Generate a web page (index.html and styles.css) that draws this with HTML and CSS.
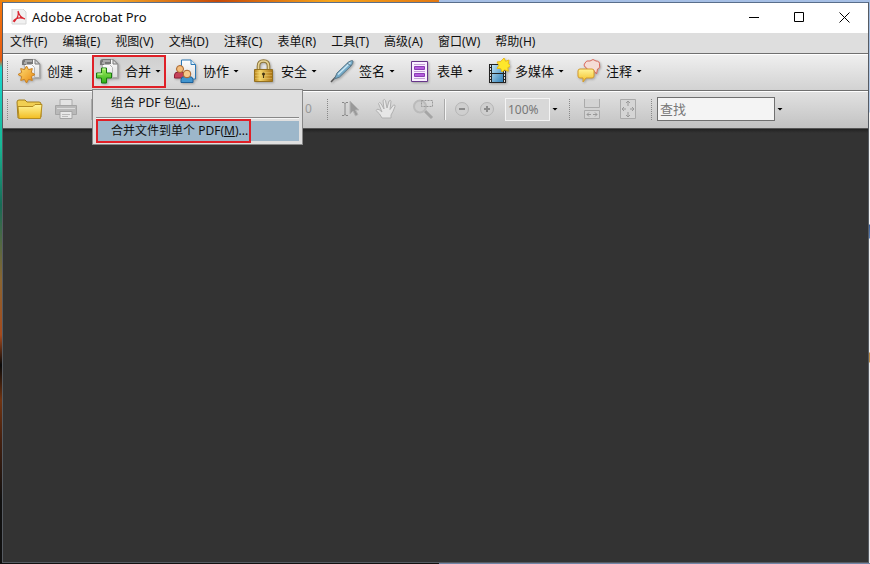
FILE: index.html
```html
<!DOCTYPE html>
<html lang="zh-CN">
<head>
<meta charset="utf-8">
<title>Adobe Acrobat Pro</title>
<link rel="stylesheet" href="styles.css">
</head>
<body>
<svg class="defs" width="0" height="0" aria-hidden="true">
  <defs>
    <linearGradient id="gold" x1="0" y1="0" x2="1" y2="1"><stop offset="0" stop-color="#ffe27a"/><stop offset="1" stop-color="#e8860c"/></linearGradient>
    <linearGradient id="yellow" x1="0" y1="0" x2="0" y2="1"><stop offset="0" stop-color="#fff59a"/><stop offset="1" stop-color="#f2bd22"/></linearGradient>
    <linearGradient id="green" x1="0" y1="0" x2="0" y2="1"><stop offset="0" stop-color="#a4ee62"/><stop offset="1" stop-color="#2fb015"/></linearGradient>
    <linearGradient id="blue" x1="0" y1="0" x2="1" y2="1"><stop offset="0" stop-color="#bfe2f4"/><stop offset="1" stop-color="#2f7fb8"/></linearGradient>
    <linearGradient id="brass" x1="0" y1="0" x2="1" y2="0"><stop offset="0" stop-color="#b8841c"/><stop offset=".3" stop-color="#f3d468"/><stop offset="1" stop-color="#ac7314"/></linearGradient>
    <linearGradient id="paper" x1="0" y1="0" x2="0" y2="1"><stop offset="0" stop-color="#fff"/><stop offset="1" stop-color="#dcdcdc"/></linearGradient>
    <symbol id="pages" viewBox="0 0 24 26">
      <path d="M10 6h13v15H11z" fill="#8b8b8b" opacity=".3"/>
      <path d="M10.500 1.500h7l4 4V19.500h-11z" fill="url(#paper)" stroke="#aaa"/>
      <path d="M17 1.500v4.500h4.500z" fill="#ddd" stroke="#777"/>
      <path d="M6.500 6.500h7l3 3V20h-10z" fill="url(#paper)" stroke="#b5b5b5"/>
      <path d="M4 7V4q0-3 3-3h8v5H8v1z" fill="#777"/>
      <path d="M7 3h7M6 5h3" stroke="#ddd"/>
    </symbol>
  </defs>
</svg>
<main class="window">
  <header class="titlebar">
    <svg class="logo" viewBox="0 0 16 16"><path d="M1 0h11l3 3v12H1z" fill="#f1f1f1" stroke="#d5d5d5"/><path d="M2 12.500C4 9.500 8 8 13.500 9.500M3 13C6 10 8 6 7 2c1 4 3 7 7 8" fill="none" stroke="#d9232e" stroke-width="1.200"/></svg>
    <h1>Adobe Acrobat Pro</h1>
    <div class="controls">
      <button aria-label="最小化"><svg viewBox="0 0 11 11"><path d="M0 5.500h10"/></svg></button>
      <button aria-label="最大化"><svg viewBox="0 0 11 11"><path d="M.5.5h9v9h-9z"/></svg></button>
      <button aria-label="关闭"><svg viewBox="0 0 11 11"><path d="M.5.5l10 10M10.500.5l-10 10"/></svg></button>
    </div>
  </header>
  <nav class="menubar">
    <button>文件(F)</button><button>编辑(E)</button><button>视图(V)</button><button>文档(D)</button><button>注释(C)</button><button>表单(R)</button><button>工具(T)</button><button>高级(A)</button><button>窗口(W)</button><button>帮助(H)</button>
  </nav>
  <div class="toolbar tasks">
    <span class="grip"></span>
    <button class="task">
      <svg class="icon" viewBox="0 0 24 26"><use href="#pages" width="24" height="26"/><path d="M8.500 8l2 3.600 3.800-1-1 3.900 3.700 2-3.700 2 1 3.900-3.800-1-2 3.600-2-3.600-3.800 1 1-3.900-3.700-2 3.700-2-1-3.900 3.800 1z" fill="url(#gold)" stroke="#c98022"/></svg>
      <span>创建</span><i class="caret"></i>
    </button>
    <div class="dropdown">
      <button class="task open" aria-expanded="true">
        <svg class="icon" viewBox="0 0 24 26"><use href="#pages" width="24" height="26"/><path d="M5.500 10h5v5h5v5h-5v5h-5v-5h-5v-5h5z" fill="url(#green)" stroke="#197a10"/><path d="M6.500 11h3M1.500 16h5" stroke="#d7ffb5"/></svg>
        <span>合并</span><i class="caret"></i>
      </button>
      <div class="popup">
        <button class="choice">组合 PDF 包(<u>A</u>)...</button>
        <hr>
        <button class="choice active"><span class="mark">合并文件到单个 PDF(<u>M</u>)...</span></button>
      </div>
    </div>
    <button class="task">
      <svg class="icon" viewBox="0 0 24 26"><path d="M7.500 2h9.500l4.500 4.500V21h-14z" fill="url(#paper)" stroke="#2d78b5"/><path d="M17 2v4.500h4.500" fill="#d9edfa" stroke="#2d78b5"/><path d="M.5 20v-3q0-3 4-3h3q4 0 4 3v3z" fill="#c54259" stroke="#8c2138"/><circle cx="6" cy="11" r="3.500" fill="#f3bd7c" stroke="#a8622b"/><path d="M7 24.500v-3q0-3 4-3h4q4 0 4 3v3z" fill="#4195cf" stroke="#1d5f98"/><circle cx="13" cy="16" r="3.800" fill="#f7c98b" stroke="#a8622b"/></svg>
      <span>协作</span><i class="caret"></i>
    </button>
    <button class="task">
      <svg class="icon" viewBox="0 0 24 26"><path d="M6.500 12V8q0-5 5-5t5 5v4" fill="none" stroke="#8d753a" stroke-width="3.600"/><path d="M6.500 12V8q0-5 5-5t5 5v4" fill="none" stroke="#e8d596" stroke-width="1.600"/><path d="M2.500 11.500h18v12h-18z" fill="url(#brass)" stroke="#94701f"/><path d="M3 14.500h17M3 17.500h17M3 20.500h17" stroke="#f6dc80" opacity=".35"/><circle cx="11.500" cy="16" r="1.500" fill="#443514"/><path d="M11 16h1v4h-1z" fill="#443514"/></svg>
      <span>安全</span><i class="caret"></i>
    </button>
    <button class="task">
      <svg class="icon" viewBox="0 0 24 26"><path d="M1 24l6-6.500" stroke="#555" stroke-width="1.500"/><path d="M4.500 21L7 15 18.500 4q4-2.500 4.500-1 .5 2-2 5L9.500 19z" fill="#75abc9" stroke="#5a7889"/><path d="M8 16.500L20.500 4.500" stroke="#cbe7f4" stroke-width="1.500"/><path d="M17 5l4 3" stroke="#5a7889"/></svg>
      <span>签名</span><i class="caret"></i>
    </button>
    <button class="task">
      <svg class="icon" viewBox="0 0 24 26"><path d="M3.500 3.500h16v20h-16z" fill="#f9efff" stroke="#67358a"/><path d="M6 6.500h11M6 13.500h11M6 20.500h11" stroke="#c5a2d6"/><path d="M6.500 8.500h10v3h-10zM6.500 15.500h10v3h-10z" fill="#b45bdd" stroke="#8b3db4"/></svg>
      <span>表单</span><i class="caret"></i>
    </button>
    <button class="task">
      <svg class="icon" viewBox="0 0 24 26"><path d="M3 6h17v19H3z" fill="#222"/><path d="M6 7h11v8H6zM6 16h11v8H6z" fill="url(#blue)"/><path d="M4.500 7v18M18.500 7v18" stroke="#ddd" stroke-dasharray="2 1"/><path d="M18 0l1.600 3.300L23 2l-.8 3.600L25 8l-3.200 1.600.5 3.600-3.600-1.300L16 14l-1.200-3.300-3.800-.4 2-3.100L11 4l3.700-.4z" fill="#fee72b" stroke="#e8b914"/></svg>
      <span>多媒体</span><i class="caret"></i>
    </button>
    <button class="task">
      <svg class="icon" viewBox="0 0 24 26"><path d="M8 9Q6 7 8 5q1-3 5-2 3-3 6 0 4 0 3.500 4 1.500 3-2 4l-1 5-3-4q-5 2-8-3z" fill="#f5dcd6" stroke="#d8685c"/><path d="M3 11h12q2 0 2 2v5q0 2-2 2H9l-3 4v-4H3q-2 0-2-2v-5q0-2 2-2z" fill="url(#yellow)" stroke="#d49a2c"/></svg>
      <span>注释</span><i class="caret"></i>
    </button>
  </div>
  <div class="toolbar tools">
    <span class="grip"></span>
    <button class="tool folder" aria-label="打开"><svg viewBox="0 0 28 22"><path d="M2 20L1 4q0-2 2-2h6l2 2h12q2 0 2 2v13z" fill="#f1cf52" stroke="#a37e1c"/><path d="M3 20.500L2 8.500h15l2-2h7L24.500 20.500z" fill="url(#yellow)" stroke="#b58c20"/></svg></button>
    <button class="tool printer" aria-label="打印" disabled><svg viewBox="0 0 22 22"><path d="M5 9V1.500h12V9" fill="#e3e3e3" stroke="#aaa"/><path d="M.5 7.500h21v9H.5z" fill="#b9b9b9" stroke="#a5a5a5"/><path d="M2 10.500h18" stroke="#ddd"/><path d="M5 13.500h12v7H5z" fill="#e9e9e9" stroke="#a5a5a5"/><path d="M7 16.500h8M7 18.500h6" stroke="#bbb"/></svg></button>
    <span class="rule"></span>
    <span class="count">0</span>
    <span class="grip"></span>
    <button class="tool pick" aria-label="选择" disabled><svg viewBox="0 0 20 20"><path d="M1 3.500h2l1 1 1-1h2M4 4v12M1 16.500h2l1-1 1 1h2" fill="none" stroke="#888"/><path d="M9 2v13l3-3 2.500 5 2.500-1.500-2.500-4.500H18z" fill="#999" stroke="#b5b5b5"/></svg></button>
    <button class="tool hand" aria-label="手形" disabled><svg viewBox="0 0 22 22"><path d="M7 20Q5 15.500 1 12.500q.5-2 3-1L7 14 3.500 5.500q1-2 2.500 0L9 11 8 2.500q1.500-2 2.500 0L12 10l2-7q2-1.500 2 .5L15 11.500l3.500-4.500q2-.5 1.500 1.500Q18 14 16 17v3z" fill="#e6e6e6" stroke="#b0b0b0"/></svg></button>
    <button class="tool lens" aria-label="缩放" disabled><svg viewBox="0 0 22 22"><path d="M13 13l7 7" stroke="#a5a5a5" stroke-width="3"/><circle cx="8" cy="8.500" r="6" fill="#cdcdcd" stroke="#bbb" stroke-width="2"/><path d="M9.500 2.500h11v6h-11z" fill="none" stroke="#999" stroke-dasharray="2 1"/></svg></button>
    <span class="rule"></span>
    <button class="tool minus" aria-label="缩小" disabled><svg viewBox="0 0 16 16"><circle cx="8" cy="8" r="6.500" fill="#cfcfcf" stroke="#b5b5b5"/><path d="M5 8h6" stroke="#8c8c8c" stroke-width="2"/></svg></button>
    <button class="tool plus" aria-label="放大" disabled><svg viewBox="0 0 16 16"><circle cx="8" cy="8" r="6.500" fill="#cfcfcf" stroke="#b5b5b5"/><path d="M5 8h6M8 5v6" stroke="#8c8c8c" stroke-width="2"/></svg></button>
    <input class="zoom" aria-label="缩放比例" value="100%" disabled>
    <i class="caret"></i>
    <span class="grip"></span>
    <button class="tool fit" aria-label="适合宽度" disabled><svg viewBox="0 0 17 22"><path d="M1 1h14v8H1z" fill="#dedede"/><path d="M.5 1v8.500h15V1M.5 20.500v-8h15v8z" fill="#d3d3d3" stroke="#aaa"/><path d="M3 16.500h4M9 16.500h4M5 14.500l-2 2 2 2M11 14.500l2 2-2 2" fill="none" stroke="#999"/></svg></button>
    <button class="tool fit" aria-label="适合页面" disabled><svg viewBox="0 0 17 22"><path d="M.5 1.500h15v19H.5z" fill="#d5d5d5" stroke="#aaa"/><path d="M8 3v5M8 14v5M2 11h4M10 11h4M6 5l2-2 2 2M6 17l2 2 2-2M4 9l-2 2 2 2M12 9l2 2-2 2" fill="none" stroke="#999"/></svg></button>
    <span class="grip"></span>
    <input class="search" aria-label="查找" placeholder="查找">
    <i class="caret"></i>
  </div>
  <section class="workspace" aria-label="文档区"></section>
</main>
</body>
</html>
```
FILE: styles.css
```css
* { box-sizing: border-box; }

body {
  display: flex;
  min-height: 100vh;
  margin: 0;
  padding: 2px 1px 1px 2px;
  font: 12px/16px "Noto Sans", "Noto Sans CJK SC", sans-serif;
  color: #111;
  background:
    linear-gradient(90deg, #e8860e, #f8b12c 12%, #c74a08 25%, #f6a51c 38%, #e27812 50.4%, #a6bfe5 50.5%) top / 100% 2px no-repeat,
    linear-gradient(90deg, #111 50.4%, #7184a5 50.5%) bottom / 100% 1px no-repeat,
    linear-gradient(#f4790c 0, #e65b12 60px, #18d8d0 68px, #18b895 145px, #176b55 205px, #8a6531 280px, #a64a1d 335px, #090909 365px, #713411 400px, #44200f 440px, #101010 500px) left / 2px 100% no-repeat,
    linear-gradient(#9bb8df 0, #b9cde8 112px, #f3f3f3 113px, #f3f3f3 224px, #385b94 225px, #5a7db2 238px, #eeeeee 239px, #eeeeee 352px, #ba8b48 353px, #ba8b48 362px, #e9e9e9 363px) right / 1px 100% no-repeat;
}

button, input { font: inherit; color: inherit; }
button { padding: 0; border: 0; background: none; }
svg { display: block; }
.defs { position: absolute; }

.window {
  display: flex;
  flex: 1;
  flex-direction: column;
  border: 1px solid #565b62;
  border-top-color: #596e8b;
  background: #333;
}

.titlebar { display: flex; align-items: center; height: 30px; padding: 0 1px 2px 8px; background: #fff; }
.logo { width: 16px; height: 16px; }
h1 { margin: 0 auto 0 5px; font-size: 13px; font-weight: 400; }
.controls { display: flex; height: 100%; }
.controls button { display: grid; width: 45px; place-items: center; }
.controls svg { width: 11px; height: 11px; fill: none; stroke: #000; }

.menubar { display: flex; gap: 15px; height: 20px; padding-left: 7px; background: #dedede; }
.menubar button { height: 18px; white-space: nowrap; }

.toolbar { display: flex; align-items: center; border-top: 1px solid #707070; box-shadow: inset 0 1px #fff; }
.tasks { height: 37px; padding: 0 0 2px 3px; background: linear-gradient(#f0f0f0, #d2d2d2); }
.tools { height: 38px; padding: 0 0 1px 3px; background: linear-gradient(#e2e2e2, #c2c2c2); }

.grip {
  flex: none;
  width: 3px;
  height: 21px;
  background: conic-gradient(#888 25%, transparent 0) 0 0 / 2px 2px;
}

.task { display: flex; align-items: center; height: 33px; margin-right: 4px; padding: 0 5px 0 4px; font-size: 13px; white-space: nowrap; }
.grip + .task { margin-left: 5px; }
.task span { margin: 0 4px 0 5px; }
.icon { width: 24px; height: 26px; filter: drop-shadow(1px 1px 1px #0004); }
.caret { flex: none; width: 6px; height: 3px; background: #000; clip-path: polygon(0 0, 100% 0, 50% 100%); }

.dropdown { position: relative; }
.open { background: linear-gradient(#cfcfcf, #dedede); outline: 2px solid #df2027; outline-offset: -2px; }

.popup {
  position: absolute;
  z-index: 1;
  top: 34px;
  left: 0;
  width: 211px;
  padding: 3px;
  border: 1px solid #888;
  background: #dfdfdf;
}
.choice { display: flex; align-items: center; width: 100%; height: 20px; padding-left: 15px; white-space: nowrap; }
.popup hr { margin: 4px 0 2px; border: 0; border-top: 1px solid #888; border-bottom: 1px solid #f5f5f5; }
.active { height: 20px; padding: 0; background: #9db7ca; }
.mark { height: 24px; padding: 2px 1px 2px 13px; border: 2px solid #df2027; }

.tool svg { width: 22px; height: 22px; }
.folder { margin-left: 7px; }
.folder svg { width: 28px; }
.printer { margin-left: 11px; }
.rule { width: 2px; height: 21px; margin-left: 14px; border-left: 1px solid #aaa; background: #f5f5f5; }
.count { width: 7px; margin-left: 212px; color: #999; }
.count + .grip { margin-left: 14px; }
.pick { margin-left: 12px; }
.pick svg { width: 20px; height: 20px; }
.hand { margin-left: 14px; }
.lens { margin-left: 15px; }
.lens + .rule { margin-left: 10px; }
.minus { margin-left: 8px; }
.plus { margin-left: 9px; }
.minus svg, .plus svg { width: 16px; height: 16px; }
.zoom { width: 45px; height: 23px; margin: 0 2px 0 10px; padding: 0 2px; border: 1px solid #f4f4f4; background: #d8d8d8; color: #777; }
.zoom + .caret + .grip { margin: 0 13px 0 10px; }
.fit { margin-right: 19px; }
.fit svg { width: 17px; }
.fit + .grip { margin: 0 4px 0 -6px; }
.search { width: 118px; height: 24px; margin-right: 2px; padding: 0 2px; border: 1px solid #707070; background: #f4f4f4; font-size: 13px; }
.search::placeholder { color: #777; opacity: 1; }

.workspace { flex: 1; border-top: 1px solid #555; background: linear-gradient(#222, #333 4px); }
```
